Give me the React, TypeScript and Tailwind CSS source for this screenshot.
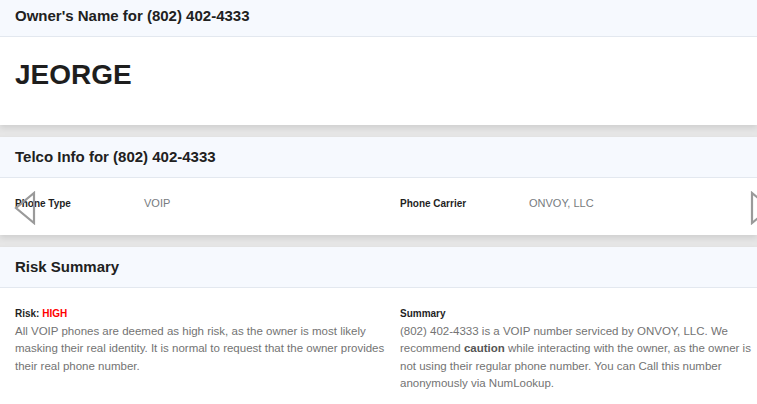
import React from "react";

const phone = "(802) 402-4333";

function CardHeader({ title }: { title: string }) {
  return (
    <div className="h-[41px] flex items-center px-[15px] bg-[#f6f9fe] border-b border-[#e3e8ef]">
      <h2 className="text-[15px] leading-[20px] font-bold text-[#212121]">{title}</h2>
    </div>
  );
}

function InfoItem({ label, value }: { label: string; value: string }) {
  return (
    <div className="flex items-center h-[20px]">
      <span className="w-[128px] text-[10px] font-bold text-[#1f1f1f]">{label}</span>
      <span className="pl-px text-[11px] text-[#777b80]">{value}</span>
    </div>
  );
}

export default function App() {
  return (
    <div
      className="w-[757px] h-[404px] overflow-hidden bg-[#e6e6e6]"
      style={{ fontFamily: '"Liberation Sans", Arial, sans-serif' }}
    >
      <div className="-mt-[4px] flex flex-col gap-[12px]">
        {/* Owner card */}
        <section className="bg-white shadow-[0_3px_6px_rgba(0,0,0,0.10)]">
          <CardHeader title={`Owner's Name for ${phone}`} />
          <div className="h-[88px] pt-[20px] px-[15px]">
            <div className="text-[28px] leading-[36px] font-bold text-[#1e1e1e]">JEORGE</div>
          </div>
        </section>

        {/* Telco card */}
        <section className="relative bg-white shadow-[0_3px_6px_rgba(0,0,0,0.10)]">
          <CardHeader title={`Telco Info for ${phone}`} />
          <div className="h-[57px] pt-[15px] pl-[15px] pr-[3px] grid grid-cols-[375px_1fr] gap-x-[10px]">
            <InfoItem label="Phone Type" value="VOIP" />
            <InfoItem label="Phone Carrier" value="ONVOY, LLC" />
          </div>
          {/* carousel arrows */}
          <svg className="absolute left-[13px] top-[54px]" width="24" height="34" viewBox="0 0 24 34">
            <polygon points="21,2 21,32 3,17" fill="none" stroke="#9a9a9a" strokeWidth="2.2" />
          </svg>
          <svg className="absolute left-[749px] top-[54px]" width="24" height="34" viewBox="0 0 24 34">
            <polygon points="3,2 3,32 21,17" fill="none" stroke="#9a9a9a" strokeWidth="2.2" />
          </svg>
        </section>

        {/* Risk card */}
        <section className="bg-white shadow-[0_3px_6px_rgba(0,0,0,0.10)] h-[200px]">
          <CardHeader title="Risk Summary" />
          <div className="pt-[17px] pl-[15px] pr-[3px] grid grid-cols-[375px_1fr] gap-x-[10px] text-[11.5px] leading-[17.5px] text-[#737373]">
            <div>
              <div className="text-[10px] font-bold text-[#1f1f1f]">
                Risk: <span className="text-[#ff0000]">HIGH</span>
              </div>
              <p>
                All VOIP phones are deemed as high risk, as the owner is most likely masking their real
                identity. It is normal to request that the owner provides their real phone number.
              </p>
            </div>
            <div>
              <div className="text-[10px] font-bold text-[#1f1f1f]">Summary</div>
              <p>
                {phone} is a VOIP number serviced by ONVOY, LLC. We recommend{" "}
                <b className="text-[#555]">caution</b> while interacting with the owner, as the owner is
                not using their regular phone number. You can Call this number anonymously via NumLookup.
              </p>
            </div>
          </div>
        </section>
      </div>
    </div>
  );
}
